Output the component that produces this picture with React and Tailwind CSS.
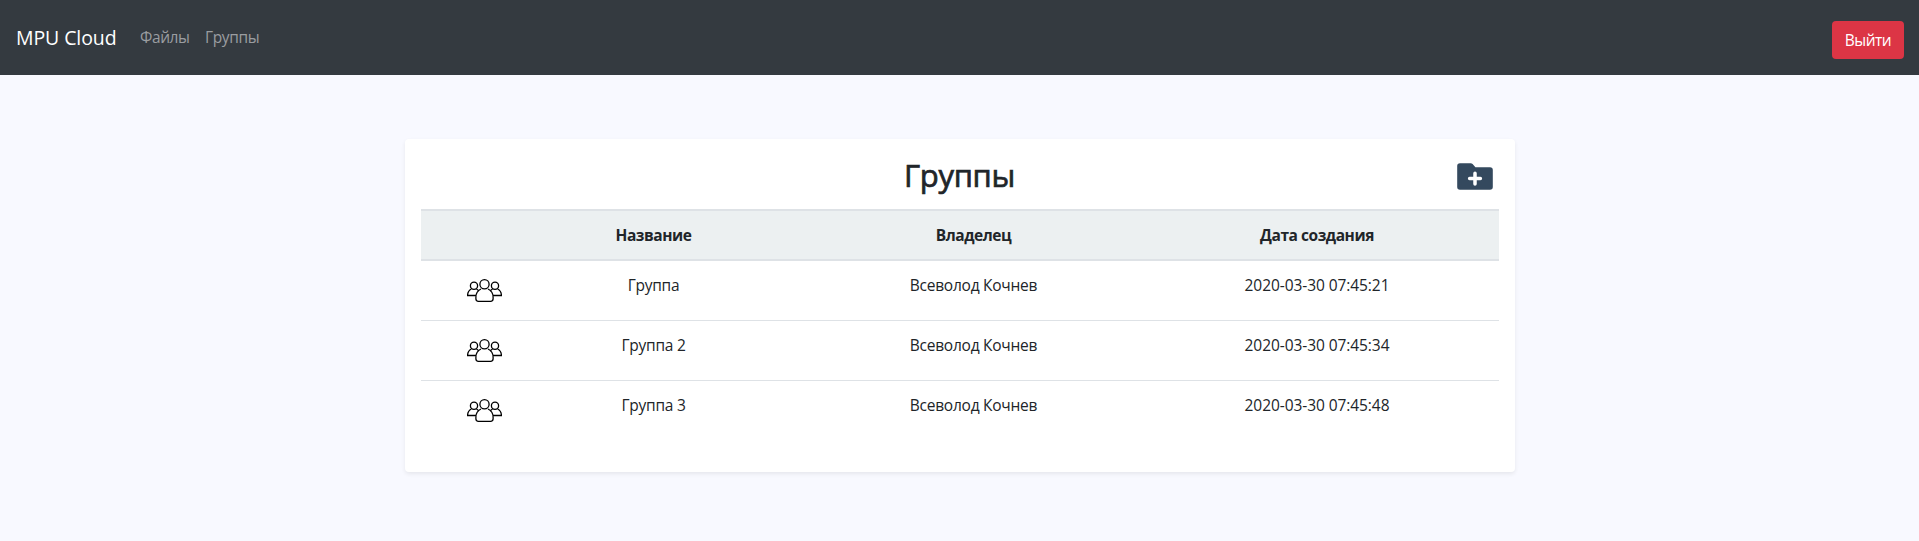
const groups = [
  { name: 'Группа', owner: 'Всеволод Кочнев', created: '2020-03-30 07:45:21' },
  { name: 'Группа 2', owner: 'Всеволод Кочнев', created: '2020-03-30 07:45:34' },
  { name: 'Группа 3', owner: 'Всеволод Кочнев', created: '2020-03-30 07:45:48' },
];

function PeopleIcon() {
  return (
    <svg className="block h-[23px] w-[35px]" viewBox="0 0 35 23" fill="none" stroke="#000" strokeWidth="1.3">
      <circle cx="17.5" cy="5.3" r="4.6" />
      <circle cx="7" cy="6.8" r="3.6" />
      <circle cx="28" cy="6.8" r="3.6" />
      <path d="M4.4 10 C1.9 11.2 0.6 13.4 0.6 16.5 H9" />
      <path d="M9.4 10 C10.4 10.5 11.2 11.2 11.8 12" />
      <path d="M30.6 10 C33.1 11.2 34.4 13.4 34.4 16.5 H26" />
      <path d="M25.6 10 C24.6 10.5 23.8 11.2 23.2 12" />
      <path d="M14 10 C10.8 11.4 8.9 14.6 8.9 18.2 V19.8 Q8.9 22.3 11.4 22.3 H23.6 Q26.1 22.3 26.1 19.8 V18.2 C26.1 14.6 24.2 11.4 21 10" />
    </svg>
  );
}

function AddFolderIcon() {
  return (
    <svg className="block h-[27px] w-[36px]" viewBox="0 0 36 27">
      <path
        fill="#34495e"
        d="M3 0.2 H13.6 Q14.8 0.2 15.6 1 L18.4 4.3 H33 Q35.8 4.3 35.8 7 V24 Q35.8 26.8 33 26.8 H3 Q0.2 26.8 0.2 24 V3 Q0.2 0.2 3 0.2 Z"
      />
      <path d="M18 10.2 V20.9 M12.6 15.6 H23.4" stroke="#fff" strokeWidth="3.5" strokeLinecap="round" />
    </svg>
  );
}

export default function App() {
  return (
    <div className="min-h-screen bg-[#f8f9ff] font-['Open_Sans','Noto_Sans',sans-serif] text-base text-[#212529]">
      <nav className="flex h-[75px] items-center bg-[#343a40] px-4">
        <a className="w-[124px] text-[19.5px] leading-[30px] tracking-[-0.1px] text-white">MPU Cloud</a>
        <a className="w-[65px] pb-px text-[15.5px] leading-6 tracking-[-0.4px] text-[#9a9da0]">Файлы</a>
        <a className="pb-px text-[15.5px] leading-6 tracking-[-0.35px] text-[#9a9da0]">Группы</a>
        <button className="mt-[5px] -mr-px ml-auto h-[38px] w-[72px] rounded bg-[#dc3545] text-[15.5px] leading-6 tracking-[-0.5px] text-white">
          Выйти
        </button>
      </nav>
      <main className="mx-auto mt-16 h-[333px] w-[1110px] rounded bg-white px-4 shadow-[0_2px_4px_rgba(0,0,0,0.075)]">
        <header className="grid h-[70px] grid-cols-[1fr_auto_1fr] items-center pt-[5px]">
          <h1 className="col-start-2 pb-[3px] text-[31px] leading-[38px] tracking-[-0.3px] [-webkit-text-stroke:0.7px_currentColor]">
            Группы
          </h1>
          <button className="mr-[6px] justify-self-end">
            <AddFolderIcon />
          </button>
        </header>
        <table className="w-full table-fixed border-collapse text-center text-[15.5px] leading-6 tracking-[-0.25px]">
          <colgroup>
            <col className="w-[75px]" />
            <col className="w-[316px]" />
            <col className="w-[324px]" />
            <col className="w-[363px]" />
          </colgroup>
          <thead>
            <tr className="h-[50px] border-y-2 border-[#dee2e6] bg-[#ecf0f1] tracking-[-0.45px]">
              <th></th>
              <th>Название</th>
              <th>Владелец</th>
              <th>Дата создания</th>
            </tr>
          </thead>
          <tbody>
            {groups.map((group) => (
              <tr key={group.created} className="h-[60px] border-b border-[#dee2e6] align-top last:border-b-0">
                <td className="pt-[18px] pl-[46px]">
                  <div className="w-[35px]">
                    <PeopleIcon />
                  </div>
                </td>
                <td className="pt-3">{group.name}</td>
                <td className="pt-3">{group.owner}</td>
                <td className="pt-3 tracking-[-0.07px]">{group.created}</td>
              </tr>
            ))}
          </tbody>
        </table>
      </main>
    </div>
  );
}
